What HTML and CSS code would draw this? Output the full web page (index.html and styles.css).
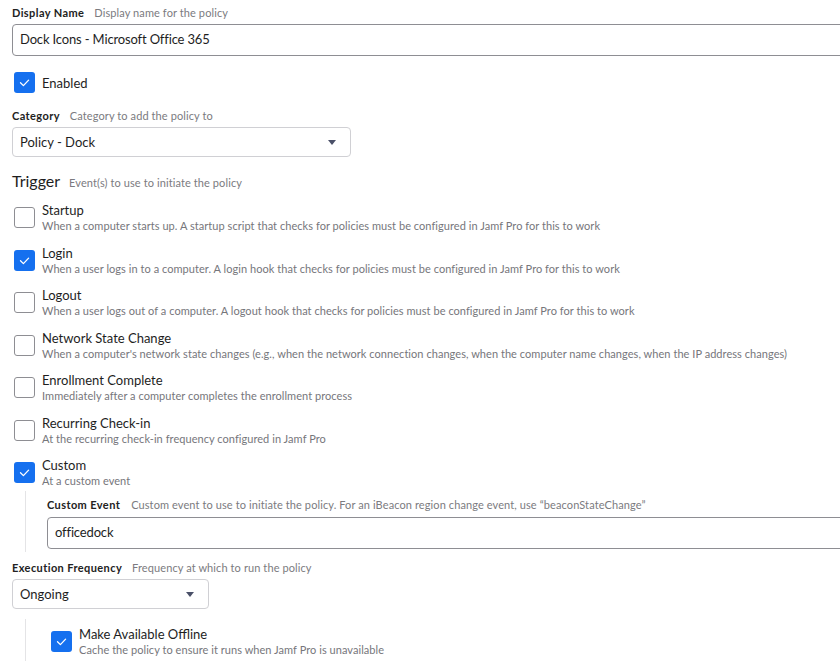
FILE: index.html
```html
<!DOCTYPE html>
<html>
<head>
<meta charset="utf-8">
<link rel="stylesheet" href="styles.css">
</head>
<body>
<div class="page">
  <div class="field">
    <div class="label"><span class="name">Display Name</span><span class="hint">Display name for the policy</span></div>
    <div class="input wide">Dock Icons - Microsoft Office 365</div>
  </div>

  <div class="check-row enabled">
    <span class="box on"><svg viewBox="0 0 21 21"><path d="M6.5 10.8 L9.4 13.6 L14.6 8.1"/></svg></span>
    <span class="title">Enabled</span>
  </div>

  <div class="field category">
    <div class="label"><span class="name">Category</span><span class="hint">Category to add the policy to</span></div>
    <div class="select cat"><span>Policy - Dock</span><span class="caret"></span></div>
  </div>

  <div class="section-head"><span class="big">Trigger</span><span class="hint">Event(s) to use to initiate the policy</span></div>

  <div class="options">
    <div class="opt">
      <span class="box"></span>
      <div class="txt"><div class="title">Startup</div><div class="desc">When a computer starts up. A startup script that checks for policies must be configured in Jamf Pro for this to work</div></div>
    </div>
    <div class="opt">
      <span class="box on"><svg viewBox="0 0 21 21"><path d="M6.5 10.8 L9.4 13.6 L14.6 8.1"/></svg></span>
      <div class="txt"><div class="title">Login</div><div class="desc">When a user logs in to a computer. A login hook that checks for policies must be configured in Jamf Pro for this to work</div></div>
    </div>
    <div class="opt">
      <span class="box"></span>
      <div class="txt"><div class="title">Logout</div><div class="desc">When a user logs out of a computer. A logout hook that checks for policies must be configured in Jamf Pro for this to work</div></div>
    </div>
    <div class="opt">
      <span class="box"></span>
      <div class="txt"><div class="title">Network State Change</div><div class="desc">When a computer's network state changes (e.g., when the network connection changes, when the computer name changes, when the IP address changes)</div></div>
    </div>
    <div class="opt">
      <span class="box"></span>
      <div class="txt"><div class="title">Enrollment Complete</div><div class="desc">Immediately after a computer completes the enrollment process</div></div>
    </div>
    <div class="opt">
      <span class="box"></span>
      <div class="txt"><div class="title">Recurring Check-in</div><div class="desc">At the recurring check-in frequency configured in Jamf Pro</div></div>
    </div>
    <div class="opt">
      <span class="box on"><svg viewBox="0 0 21 21"><path d="M6.5 10.8 L9.4 13.6 L14.6 8.1"/></svg></span>
      <div class="txt"><div class="title">Custom</div><div class="desc">At a custom event</div></div>
    </div>
  </div>

  <div class="nested custom-event">
    <div class="label"><span class="name">Custom Event</span><span class="hint">Custom event to use to initiate the policy. For an iBeacon region change event, use “beaconStateChange”</span></div>
    <div class="input wide">officedock</div>
  </div>

  <div class="field freq">
    <div class="label"><span class="name">Execution Frequency</span><span class="hint">Frequency at which to run the policy</span></div>
    <div class="select fr"><span>Ongoing</span><span class="caret"></span></div>
  </div>

  <div class="nested offline">
    <div class="opt">
      <span class="box on"><svg viewBox="0 0 21 21"><path d="M6.5 10.8 L9.4 13.6 L14.6 8.1"/></svg></span>
      <div class="txt"><div class="title">Make Available Offline</div><div class="desc">Cache the policy to ensure it runs when Jamf Pro is unavailable</div></div>
    </div>
  </div>
</div>
</body>
</html>
```

FILE: styles.css
```css
html, body {
  margin: 0;
  padding: 0;
  background: #ffffff;
  overflow: hidden;
}
body {
  font-family: "Lato", "Open Sans", sans-serif;
  color: #1e1e1e;
  width: 840px;
  height: 665px;
}
.page {
  padding: 5px 0 0 12px;
  display: flex;
  flex-direction: column;
  width: 828px;
  overflow: hidden;
}
.label {
  display: flex;
  align-items: baseline;
  gap: 10px;
  height: 15px;
  line-height: 15px;
  white-space: nowrap;
}
.label .name {
  font-size: 11px;
  font-weight: 700;
  color: #222;
  letter-spacing: 0.4px;
}
.hint {
  font-size: 11px;
  color: #7b7b80;
  letter-spacing: 0.1px;
}
.input {
  box-sizing: border-box;
  height: 32px;
  border: 1px solid #8e8e93;
  border-radius: 4px;
  margin-top: 4px;
  padding: 0 7px;
  font-size: 13px;
  line-height: 29px;
  color: #1e1e1e;
  letter-spacing: -0.15px;
}
.wide {
  width: 900px;
  flex: none;
}
.check-row {
  display: flex;
  align-items: center;
  gap: 7px;
  margin-top: 16px;
  padding-left: 2px;
}
.check-row .title {
  font-size: 13px;
  line-height: 16px;
}
.box {
  box-sizing: border-box;
  width: 21px;
  height: 21px;
  flex: none;
  border: 1px solid #8e8e93;
  border-radius: 3px;
  background: #fff;
  display: flex;
}
.box.on {
  border: none;
  background: #1570ef;
}
.box svg {
  width: 21px;
  height: 21px;
}
.box svg path {
  fill: none;
  stroke: #ffffff;
  stroke-width: 1.3;
  stroke-linecap: round;
  stroke-linejoin: round;
}
.category {
  margin-top: 15px;
}
.select {
  box-sizing: border-box;
  height: 30px;
  border: 1px solid #d0d0d4;
  border-radius: 4px;
  padding: 0 14px 0 7px;
  display: flex;
  align-items: center;
  justify-content: space-between;
  font-size: 13px;
}
.select.cat {
  width: 339px;
  margin-top: 4px;
}
.select.fr {
  width: 197px;
  margin-top: 4px;
}
.caret {
  width: 0;
  height: 0;
  border-left: 4px solid transparent;
  border-right: 4px solid transparent;
  border-top: 5px solid #4a5068;
  margin-top: 1px;
}
.section-head {
  display: flex;
  align-items: baseline;
  gap: 9px;
  margin-top: 14px;
  height: 20px;
}
.section-head .big {
  font-size: 16px;
  color: #1e1e1e;
}
.options {
  display: flex;
  flex-direction: column;
  gap: 11.5px;
  margin-top: 11px;
}
.opt {
  display: flex;
  gap: 7px;
  padding-left: 2px;
}
.opt .box {
  margin-top: 5px;
}
.txt {
  display: flex;
  flex-direction: column;
}
.title {
  font-size: 13px;
  line-height: 16px;
  color: #1e1e1e;
}
.desc {
  font-size: 11px;
  line-height: 15px;
  color: #76767b;
  white-space: nowrap;
  letter-spacing: 0.05px;
}
.nested {
  margin-left: 13px;
  border-left: 1px solid #e4e4e6;
}
.custom-event {
  margin-top: 3px;
  padding: 6px 0 3px 21px;
}
.custom-event .label {
  gap: 11px;
}
.custom-event .input {
  margin-top: 5px;
}
.freq {
  margin-top: 8px;
}
.offline {
  margin-top: 10px;
  padding: 7px 0 4px 23px;
}
```
